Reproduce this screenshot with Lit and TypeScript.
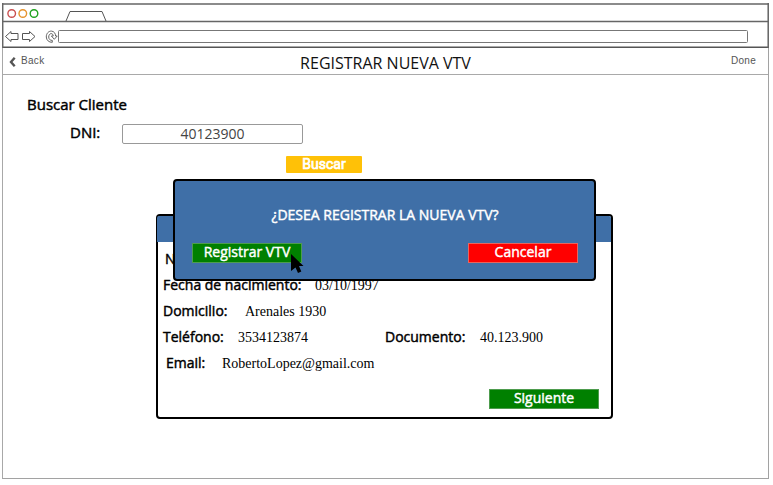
import { LitElement, html, css } from "lit";
import { customElement } from "lit/decorators.js";

@customElement("app-root")
export class AppRoot extends LitElement {
  static styles = css`
    :host { display: block; position: relative; width: 773px; height: 485px; background: #fff; overflow: hidden; font-family: "Open Sans", "Noto Sans", sans-serif; color: #000; }
    * { box-sizing: border-box; }
    .window { margin: 3px 0 0 2px; width: 767px; height: 476px; display: flex; flex-direction: column; border: 1px solid #a2a2a2; border-top: 0; border-left: 1px solid #a8a8a8; }
    .chrome { display: block; flex: none; margin: 0 -1px; width: 767px; height: 45px; }
    .nav { flex: none; height: 27px; border-bottom: 1px solid #a9a9a9; display: grid; grid-template-columns: 120px 1fr 120px; }
    .back, .done { font: 10px/24px "Liberation Sans", sans-serif; letter-spacing: 0.3px; color: #555; display: flex; }
    .back { padding: 1px 0 0 6px; gap: 5px; align-items: flex-start; }
    .back svg { margin-top: 8px; }
    .done { padding: 1px 12px 0 0; justify-content: flex-end; }
    .title { font-size: 16px; line-height: 30px; text-align: center; color: #111; white-space: nowrap; }
    .bold { -webkit-text-stroke: 0.45px currentColor; white-space: nowrap; }
    .search { padding: 18px 0 0 23px; display: flex; flex-direction: column; align-items: flex-start; }
    .heading { font-size: 15px; line-height: 22px; padding-left: 1px; }
    .field { display: flex; padding-left: 43px; margin-top: 9px; height: 20px; }
    .field .bold { width: 53px; font-size: 15px; line-height: 17px; padding-left: 1px; }
    .input { width: 181px; height: 20px; border: 1px solid #999; border-radius: 2px; text-align: center; font-size: 14px; line-height: 18px; color: #444; }
    .btn { color: #fff; text-align: center; font-size: 14px; border: 1px solid #4e9c4e; height: 20px; width: 110px; line-height: 16px; background: #008000; }
    .btn.find { margin: 12px 0 0 260px; width: 76px; height: 17px; line-height: 17px; background: #ffc107; border: 0; border-radius: 1px; font-family: Roboto, sans-serif; -webkit-text-stroke-width: 0.7px; }
    .btn.cancel { background: #f00; border-color: #e8655d; }
    .card { margin: 41px 0 0 153px; width: 457px; height: 205px; border: 2px solid #000; border-radius: 4px; position: relative; background: #fff; }
    .card-head { height: 26px; background: #3f6fa7; margin-left: -1px; border-radius: 2px 2px 0 0; }
    .row { display: flex; height: 26px; line-height: 26px; padding-left: 5px; font-size: 14px; }
    .row.first { margin-top: 4px; padding-left: 7px; }
    .row.mail { padding-left: 8px; }
    .value { font-family: "Liberation Serif", serif; font-size: 14px; line-height: 28px; white-space: nowrap; }
    .birth { width: 152px; } .home { width: 82px; } .phone { width: 75px; } .email { width: 56px; } .doc { width: 95px; }
    .number { width: 147px; }
    .next { margin: 13px 0 0 331px; }
    .dialog { position: absolute; left: 173px; top: 179px; width: 423px; height: 102px; border: 2px solid #000; border-radius: 4px; background: #3f6fa7; color: #fff; padding: 24px 16px 0 17px; }
    .question { text-align: center; font-size: 14px; line-height: 20px; }
    .actions { display: flex; justify-content: space-between; margin-top: 18px; }
    .cursor { position: absolute; left: 290px; top: 254px; }
  `;

  render() {
    return html`
      <div class="window">
        <svg class="chrome" viewBox="2 3 767 45" fill="none">
          <path d="M2 4H769M2 21.5H769" stroke="#666" stroke-width="1.4" />
          <path d="M2 47.3H769" stroke="#555" stroke-width="1.7" />
          <path d="M2.7 3V48M768.2 3V48" stroke="#666" stroke-width="1.5" />
          <g stroke-width="1.4">
            <circle cx="11.7" cy="13.5" r="3.8" stroke="#c94f4f" />
            <circle cx="22.8" cy="13.5" r="3.8" stroke="#e5942f" />
            <circle cx="34" cy="13.5" r="3.8" stroke="#1fa31f" />
          </g>
          <path d="M66 21L70 11.5H102L106 21" stroke="#555" />
          <g stroke="#555" stroke-width="1">
            <path d="M5.5 36.5L11 31.5V33.5H18V39.5H11V41.5Z" />
            <path d="M35 36.5L29.5 31.5V33.5H22.5V39.5H29.5V41.5Z" />
            <path d="M52.3 42.3C49 42.5 46.4 40.2 46.3 37C46.2 33.6 48.5 31 51.4 31.1C54 31.2 55.6 33.5 55.6 36H57.2L54.3 39.3L51.4 36H53.2C53.2 34.6 52.4 33.6 51.2 33.6C49.7 33.6 48.7 35.2 48.7 37C48.8 39.2 50.2 40.5 52.3 40.4Z" stroke-width="0.9" />
            <rect x="58.5" y="30.5" width="689" height="12" rx="1" fill="#fff" stroke="#777" />
          </g>
        </svg>
        <div class="nav">
          <div class="back">
            <svg width="7" height="10" viewBox="0 0 7 10" fill="none"><path d="M5.7 .8L2 5L5.7 9.2" stroke="#555" stroke-width="2.4" /></svg>
            <span>Back</span>
          </div>
          <div class="title">REGISTRAR NUEVA VTV</div>
          <div class="done">Done</div>
        </div>
        <div class="search">
          <div class="heading bold">Buscar Cliente</div>
          <div class="field"><div class="bold">DNI:</div><div class="input">40123900</div></div>
          <div class="btn find bold">Buscar</div>
        </div>
        <div class="card">
          <div class="card-head"></div>
          <div class="row first"><div class="bold">N</div></div>
          <div class="row"><div class="bold birth">Fecha de nacimiento:</div><div class="value">03/10/1997</div></div>
          <div class="row"><div class="bold home">Domicilio:</div><div class="value">Arenales 1930</div></div>
          <div class="row"><div class="bold phone">Teléfono:</div><div class="value number">3534123874</div><div class="bold doc">Documento:</div><div class="value">40.123.900</div></div>
          <div class="row mail"><div class="bold email">Email:</div><div class="value">RobertoLopez@gmail.com</div></div>
          <div class="btn next bold">Siguiente</div>
        </div>
      </div>
      <div class="dialog">
        <div class="question bold">¿DESEA REGISTRAR LA NUEVA VTV?</div>
        <div class="actions">
          <div class="btn bold">Registrar VTV</div>
          <div class="btn cancel bold">Cancelar</div>
        </div>
      </div>
      <svg class="cursor" width="14" height="20" viewBox="0 0 14 20"><path d="M1 0L13.5 12H9L11.3 17.5L8 19L5.5 13.5L1 17Z" fill="#000" /></svg>
    `;
  }
}
